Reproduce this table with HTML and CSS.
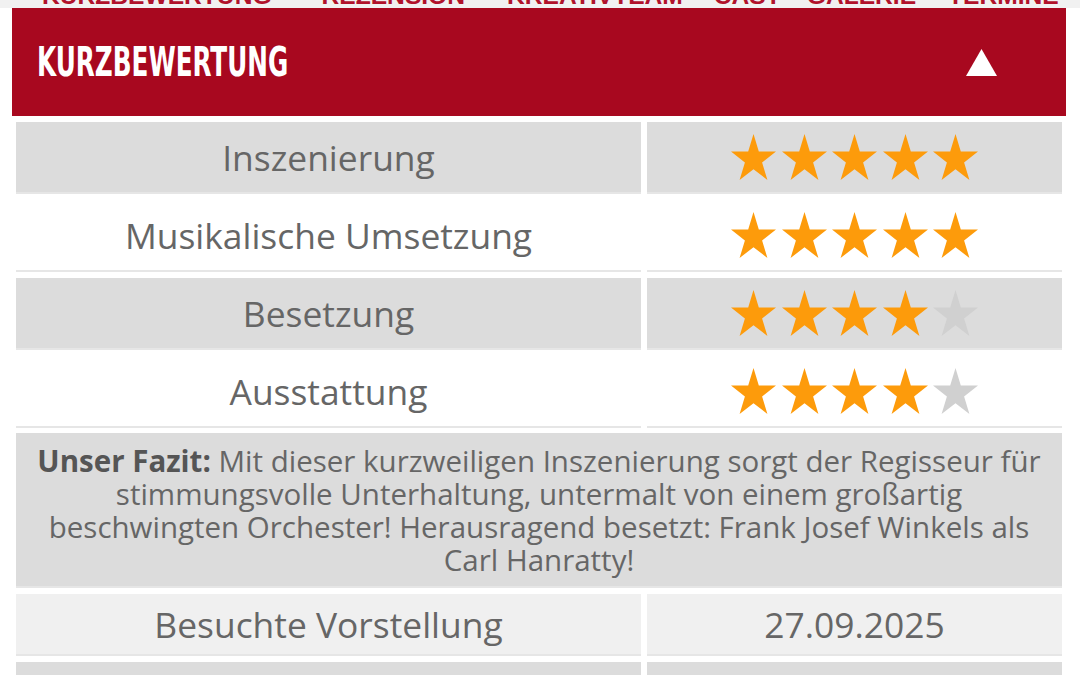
FILE: index.html
```html
<!DOCTYPE html>
<html lang="de">
<head>
<meta charset="utf-8">
<title>Kurzbewertung</title>
<link rel="stylesheet" href="styles.css">
</head>
<body>
<svg class="defs" width="0" height="0" aria-hidden="true">
  <symbol id="star" viewBox="-0.951 -1 1.902 1.809" preserveAspectRatio="none">
    <polygon points="0,-1 0.2245,-0.309 0.951,-0.309 0.3633,0.118 0.5878,0.809 0,0.382 -0.5878,0.809 -0.3633,0.118 -0.951,-0.309 -0.2245,-0.309"/>
  </symbol>
</svg>

<nav class="tabs">
  <span class="tab">KURZBEWERTUNG</span>
  <span class="tab">REZENSION</span>
  <span class="tab">KREATIVTEAM</span>
  <span class="tab">CAST</span>
  <span class="tab">GALERIE</span>
  <span class="tab">TERMINE</span>
</nav>

<section class="panel">
  <header class="panel-head">
    <h2 class="panel-title"><span>KURZBEWERTUNG</span></h2>
    <svg class="toggle" width="31" height="27" viewBox="0 0 31 27"><polygon points="15.5,0 31,27 0,27"/></svg>
  </header>

  <div class="rating">
    <div class="cell label grey">Inszenierung</div>
    <div class="cell stars grey">
      <svg class="star on"><use href="#star"/></svg><svg class="star on"><use href="#star"/></svg><svg class="star on"><use href="#star"/></svg><svg class="star on"><use href="#star"/></svg><svg class="star on"><use href="#star"/></svg>
    </div>

    <div class="cell label white">Musikalische Umsetzung</div>
    <div class="cell stars white">
      <svg class="star on"><use href="#star"/></svg><svg class="star on"><use href="#star"/></svg><svg class="star on"><use href="#star"/></svg><svg class="star on"><use href="#star"/></svg><svg class="star on"><use href="#star"/></svg>
    </div>

    <div class="cell label grey">Besetzung</div>
    <div class="cell stars grey">
      <svg class="star on"><use href="#star"/></svg><svg class="star on"><use href="#star"/></svg><svg class="star on"><use href="#star"/></svg><svg class="star on"><use href="#star"/></svg><svg class="star off"><use href="#star"/></svg>
    </div>

    <div class="cell label white">Ausstattung</div>
    <div class="cell stars white">
      <svg class="star on"><use href="#star"/></svg><svg class="star on"><use href="#star"/></svg><svg class="star on"><use href="#star"/></svg><svg class="star on"><use href="#star"/></svg><svg class="star off"><use href="#star"/></svg>
    </div>

    <div class="fazit grey"><b>Unser Fazit:</b> Mit dieser kurzweiligen Inszenierung sorgt der Regisseur für<br>stimmungsvolle Unterhaltung, untermalt von einem großartig<br>beschwingten Orchester! Herausragend besetzt: Frank Josef Winkels als<br>Carl Hanratty!</div>

    <div class="cell label light">Besuchte Vorstellung</div>
    <div class="cell value light">27.09.2025</div>

    <div class="cell label grey"></div>
    <div class="cell value grey"></div>
  </div>
</section>
</body>
</html>
```

FILE: styles.css
```css
html, body {
  margin: 0;
  padding: 0;
  overflow: hidden;
  background: #ffffff;
}

body {
  font-family: "Open Sans", "Liberation Sans", sans-serif;
  color: #666666;
}

.defs {
  position: absolute;
  width: 0;
  height: 0;
}

/* top tab strip (scrolled, only the bottom of the labels shows) */
.tabs {
  height: 8px;
  overflow: hidden;
  background: #f1f1f1;
  display: flex;
  align-items: flex-end;
  padding: 0 0 0 42px;
}

.tab {
  font-family: "Liberation Sans", Arial, sans-serif;
  font-weight: bold;
  font-size: 24.6px;
  line-height: 1;
  color: #b0122b;
  white-space: nowrap;
  position: relative;
  top: 1px;
}

.tab:nth-child(2) { margin-left: 50px; }
.tab:nth-child(3) { margin-left: 42px; }
.tab:nth-child(4) { margin-left: 31px; }
.tab:nth-child(5) { margin-left: 26px; }
.tab:nth-child(6) { margin-left: 32px; }

/* red accordion header */
.panel-head {
  margin: 0 14px 0 12px;
  height: 108px;
  background: #a8081f;
  display: flex;
  align-items: center;
  justify-content: space-between;
  padding: 0 69px 0 25px;
  box-sizing: border-box;
}

.panel-title {
  margin: 0;
  font-family: "Liberation Sans Narrow", "DejaVu Sans Condensed", "Liberation Sans", sans-serif;
  font-weight: bold;
  font-size: 41px;
  line-height: 1;
  color: #ffffff;
}

.panel-title span {
  display: inline-block;
  transform: scaleX(0.67);
  transform-origin: left center;
}

.toggle {
  fill: #ffffff;
  display: block;
}

/* rating table */
.rating {
  margin: 6px 18px 0 16px;
  display: grid;
  grid-template-columns: 625px 415px;
  grid-template-rows: 72px 72px 72px 72px 154px 62px 72px;
  gap: 6px;
}

.cell {
  box-sizing: border-box;
  display: flex;
  align-items: center;
  justify-content: center;
  text-align: center;
  border-bottom: 2px solid #e6e6e6;
  font-size: 35.4px;
}

.grey { background: #dcdcdc; }
.white { background: #ffffff; }
.light { background: #f0f0f0; }

.stars {
  gap: 5.5px;
}

.star {
  width: 45px;
  height: 46px;
  display: block;
}

.star.on { fill: #fd9b0b; }
.star.off { fill: #d0d0d0; }

.fazit {
  grid-column: 1 / span 2;
  box-sizing: border-box;
  border-bottom: 2px solid #e6e6e6;
  margin-top: -1px;
  padding: 11px 0 0;
  font-size: 29.5px;
  line-height: 33px;
  text-align: center;
  white-space: nowrap;
}

.fazit b {
  color: #555555;
  font-weight: 700;
}
```
